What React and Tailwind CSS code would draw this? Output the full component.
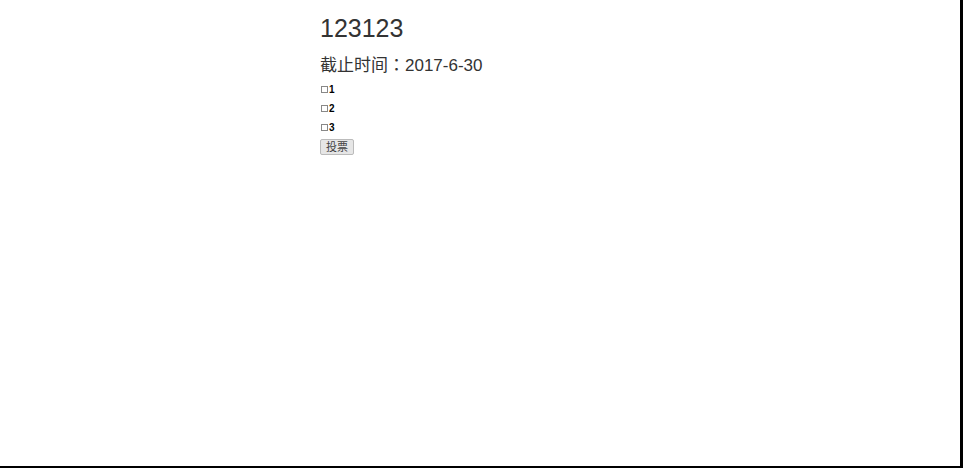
import React from "react";

const options = ["1", "2", "3"];

function App() {
  return (
    <div
      className="w-[963px] h-[468px] bg-white border-r-[3px] border-b-2 border-black box-border overflow-hidden text-[#333]"
      style={{ fontFamily: '"Liberation Sans", "Noto Sans CJK SC", sans-serif' }}
    >
      <div className="pl-[320px] pt-[14px]">
        <h1 className="text-[25px] leading-[28px] font-normal">123123</h1>
        <h2 className="mt-[11px] text-[17px] leading-[22px] font-normal">
          截止时间<span style={{ fontFamily: '"Noto Sans CJK TC", sans-serif' }}>：</span>2017-6-30
        </h2>
        <div className="mt-[6px] flex flex-col gap-[7px]">
          {options.map((o) => (
            <label key={o} className="flex items-center h-[12px] pl-[1px] text-[10px] font-bold text-black">
              <span className="w-[7px] h-[7px] border border-[#888] mr-[1px]" />
              {o}
            </label>
          ))}
        </div>
        <button className="mt-[6px] h-[16px] px-[5px] bg-[#e6e6e6] border border-[#bbb] rounded-[2px] text-[11px] leading-[14px] text-[#444]">
          投票
        </button>
      </div>
    </div>
  );
}

export default App;
